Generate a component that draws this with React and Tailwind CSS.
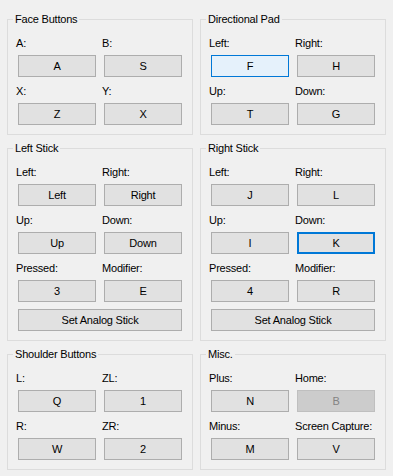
import React from 'react'

const font = { fontFamily: '"Liberation Sans", Arial, sans-serif' }

const KeyButton = ({ children, variant }) => {
  let cls = 'bg-[#e1e1e1] border border-[#adadad] text-black'
  if (variant === 'hover') cls = 'bg-[#e5f1fb] border border-[#0078d7] text-black'
  if (variant === 'focus') cls = 'bg-[#e1e1e1] border-2 border-[#0078d7] text-black'
  if (variant === 'disabled') cls = 'bg-[#cccccc] border border-[#bfbfbf] text-[#838383]'
  return (
    <div className={`ml-[2px] h-[22px] flex items-center justify-center text-[11px] tracking-[-0.2px] ${cls}`}>
      {children}
    </div>
  )
}

const Cell = ({ label, value, variant }) => (
  <div className="flex flex-col">
    <div className="h-[15px] leading-[15px] text-[11px] tracking-[-0.2px] text-black whitespace-nowrap">{label}</div>
    <div className="mt-[4px] w-[80px]">
      <KeyButton variant={variant}>{value}</KeyButton>
    </div>
  </div>
)

const Group = ({ title, rows, footer }) => (
  <fieldset className="border border-[#dcdcdc] pl-[5px] pr-[4px] pt-[9px] pb-[9px] min-w-0">
    <legend className="px-[2px] leading-[15px] text-[11px] tracking-[-0.2px] text-black">{title}</legend>
    <div className="ml-[3px] flex flex-col gap-[7px]">
      {rows.map((row, i) => (
        <div key={i} className="grid grid-cols-[86px_86px]">
          {row.map((c) => (
            <Cell key={c[0]} label={c[0]} value={c[1]} variant={c[2]} />
          ))}
        </div>
      ))}
      {footer && (
        <div className="w-[166px]">
          <KeyButton>{footer}</KeyButton>
        </div>
      )}
    </div>
  </fieldset>
)

export default function App() {
  return (
    <div className="w-[393px] h-[476px] bg-[#f0f0f0] pl-[7px] pt-[12px] overflow-hidden" style={font}>
      <div className="grid grid-cols-[186px_186px] gap-x-[7px] gap-y-[6px]">
        <Group
          title="Face Buttons"
          rows={[
            [['A:', 'A'], ['B:', 'S']],
            [['X:', 'Z'], ['Y:', 'X']],
          ]}
        />
        <Group
          title="Directional Pad"
          rows={[
            [['Left:', 'F', 'hover'], ['Right:', 'H']],
            [['Up:', 'T'], ['Down:', 'G']],
          ]}
        />
        <Group
          title="Left Stick"
          rows={[
            [['Left:', 'Left'], ['Right:', 'Right']],
            [['Up:', 'Up'], ['Down:', 'Down']],
            [['Pressed:', '3'], ['Modifier:', 'E']],
          ]}
          footer="Set Analog Stick"
        />
        <Group
          title="Right Stick"
          rows={[
            [['Left:', 'J'], ['Right:', 'L']],
            [['Up:', 'I'], ['Down:', 'K', 'focus']],
            [['Pressed:', '4'], ['Modifier:', 'R']],
          ]}
          footer="Set Analog Stick"
        />
        <Group
          title="Shoulder Buttons"
          rows={[
            [['L:', 'Q'], ['ZL:', '1']],
            [['R:', 'W'], ['ZR:', '2']],
          ]}
        />
        <Group
          title="Misc."
          rows={[
            [['Plus:', 'N'], ['Home:', 'B', 'disabled']],
            [['Minus:', 'M'], ['Screen Capture:', 'V']],
          ]}
        />
      </div>
    </div>
  )
}
